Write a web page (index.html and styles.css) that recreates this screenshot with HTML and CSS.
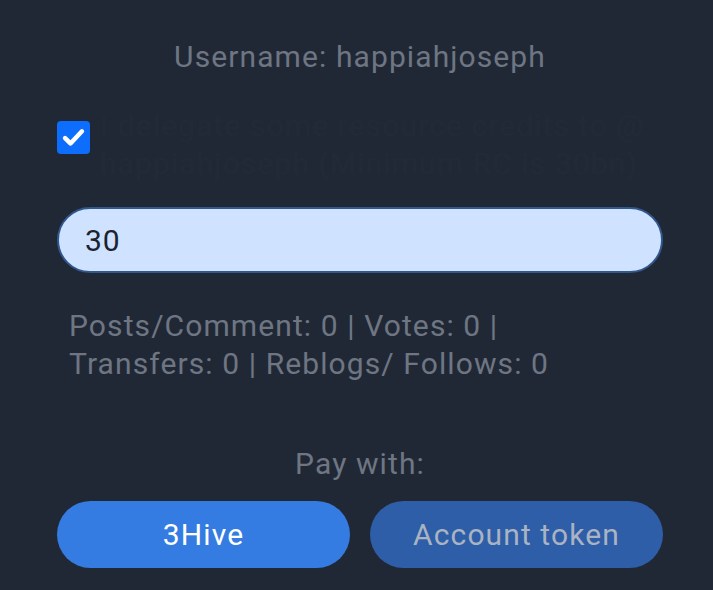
FILE: index.html
```html
<!DOCTYPE html>
<html>
<head>
<meta charset="utf-8">
<link rel="stylesheet" href="styles.css">
</head>
<body>
<div class="panel">
  <div class="username">Username: happiahjoseph</div>
  <label class="check-row">
    <span class="checkbox">
      <svg viewBox="0 0 24 24"><path d="M4.5 12.5l4.8 4.8L19.5 6.5" fill="none" stroke="#fff" stroke-width="4" stroke-linecap="round" stroke-linejoin="round"/></svg>
    </span>
    <span class="check-label">I delegate some resource credits to @happiahjoseph (Minimum RC is 30bn)</span>
  </label>
  <div class="input-wrap"><input class="amount" type="text" value="30"></div>
  <div class="stats">Posts/Comment: 0 | Votes: 0 | Transfers: 0 | Reblogs/ Follows: 0</div>
  <div class="pay-label">Pay with:</div>
  <div class="buttons">
    <button class="btn btn-primary">3Hive</button>
    <button class="btn btn-secondary">Account token</button>
  </div>
</div>
</body>
</html>
```
FILE: styles.css
```css
html, body {
  margin: 0;
  padding: 0;
  background: #212835;
  font-family: Roboto, "Noto Sans", sans-serif;
}
.panel {
  padding: 37px 50px 0 57px;
  display: flex;
  flex-direction: column;
  letter-spacing: 1.1px;
}
.username {
  text-align: center;
  color: #6e7683;
  font-size: 30px;
  line-height: 40px;
  width: 606px;
}
.check-row {
  display: flex;
  align-items: flex-start;
  gap: 10px;
  margin-top: 42px;
}
.checkbox {
  flex: none;
  width: 33px;
  height: 33px;
  border-radius: 4px;
  background: #0d6efd;
  display: flex;
  align-items: center;
  justify-content: center;
  margin-top: 2px;
}
.checkbox svg { width: 27px; height: 27px; }
.check-label {
  color: #232a37;
  font-size: 30px;
  line-height: 38px;
  margin-top: -12px;
  margin-bottom: 4px;
  width: 555px;
  word-break: break-all;
}
.input-wrap {
  margin-top: 20px;
}
.amount {
  box-sizing: border-box;
  width: 606px;
  height: 66px;
  border: 2px solid #31578c;
  border-radius: 33px;
  background: #cfe2ff;
  color: #1b2230;
  font-family: Roboto, "Noto Sans", sans-serif;
  font-size: 30px;
  letter-spacing: 1px;
  padding: 0 0 0 26px;
  outline: none;
}
.stats {
  color: #6e7683;
  font-size: 30px;
  line-height: 38px;
  margin-top: 34px;
  padding-left: 12px;
  width: 500px;
}
.pay-label {
  text-align: center;
  color: #6e7683;
  font-size: 30px;
  line-height: 38px;
  margin-top: 62px;
  width: 606px;
}
.buttons {
  display: flex;
  gap: 20px;
  margin-top: 18px;
  width: 606px;
}
.btn {
  flex: 1;
  height: 67px;
  border: none;
  border-radius: 34px;
  font-family: Roboto, "Noto Sans", sans-serif;
  font-size: 30px;
  letter-spacing: 1.1px;
}
.btn-primary {
  background: #347ce1;
  color: #ffffff;
}
.btn-secondary {
  background: #2d5ea7;
  color: #a9b3c3;
}
```
